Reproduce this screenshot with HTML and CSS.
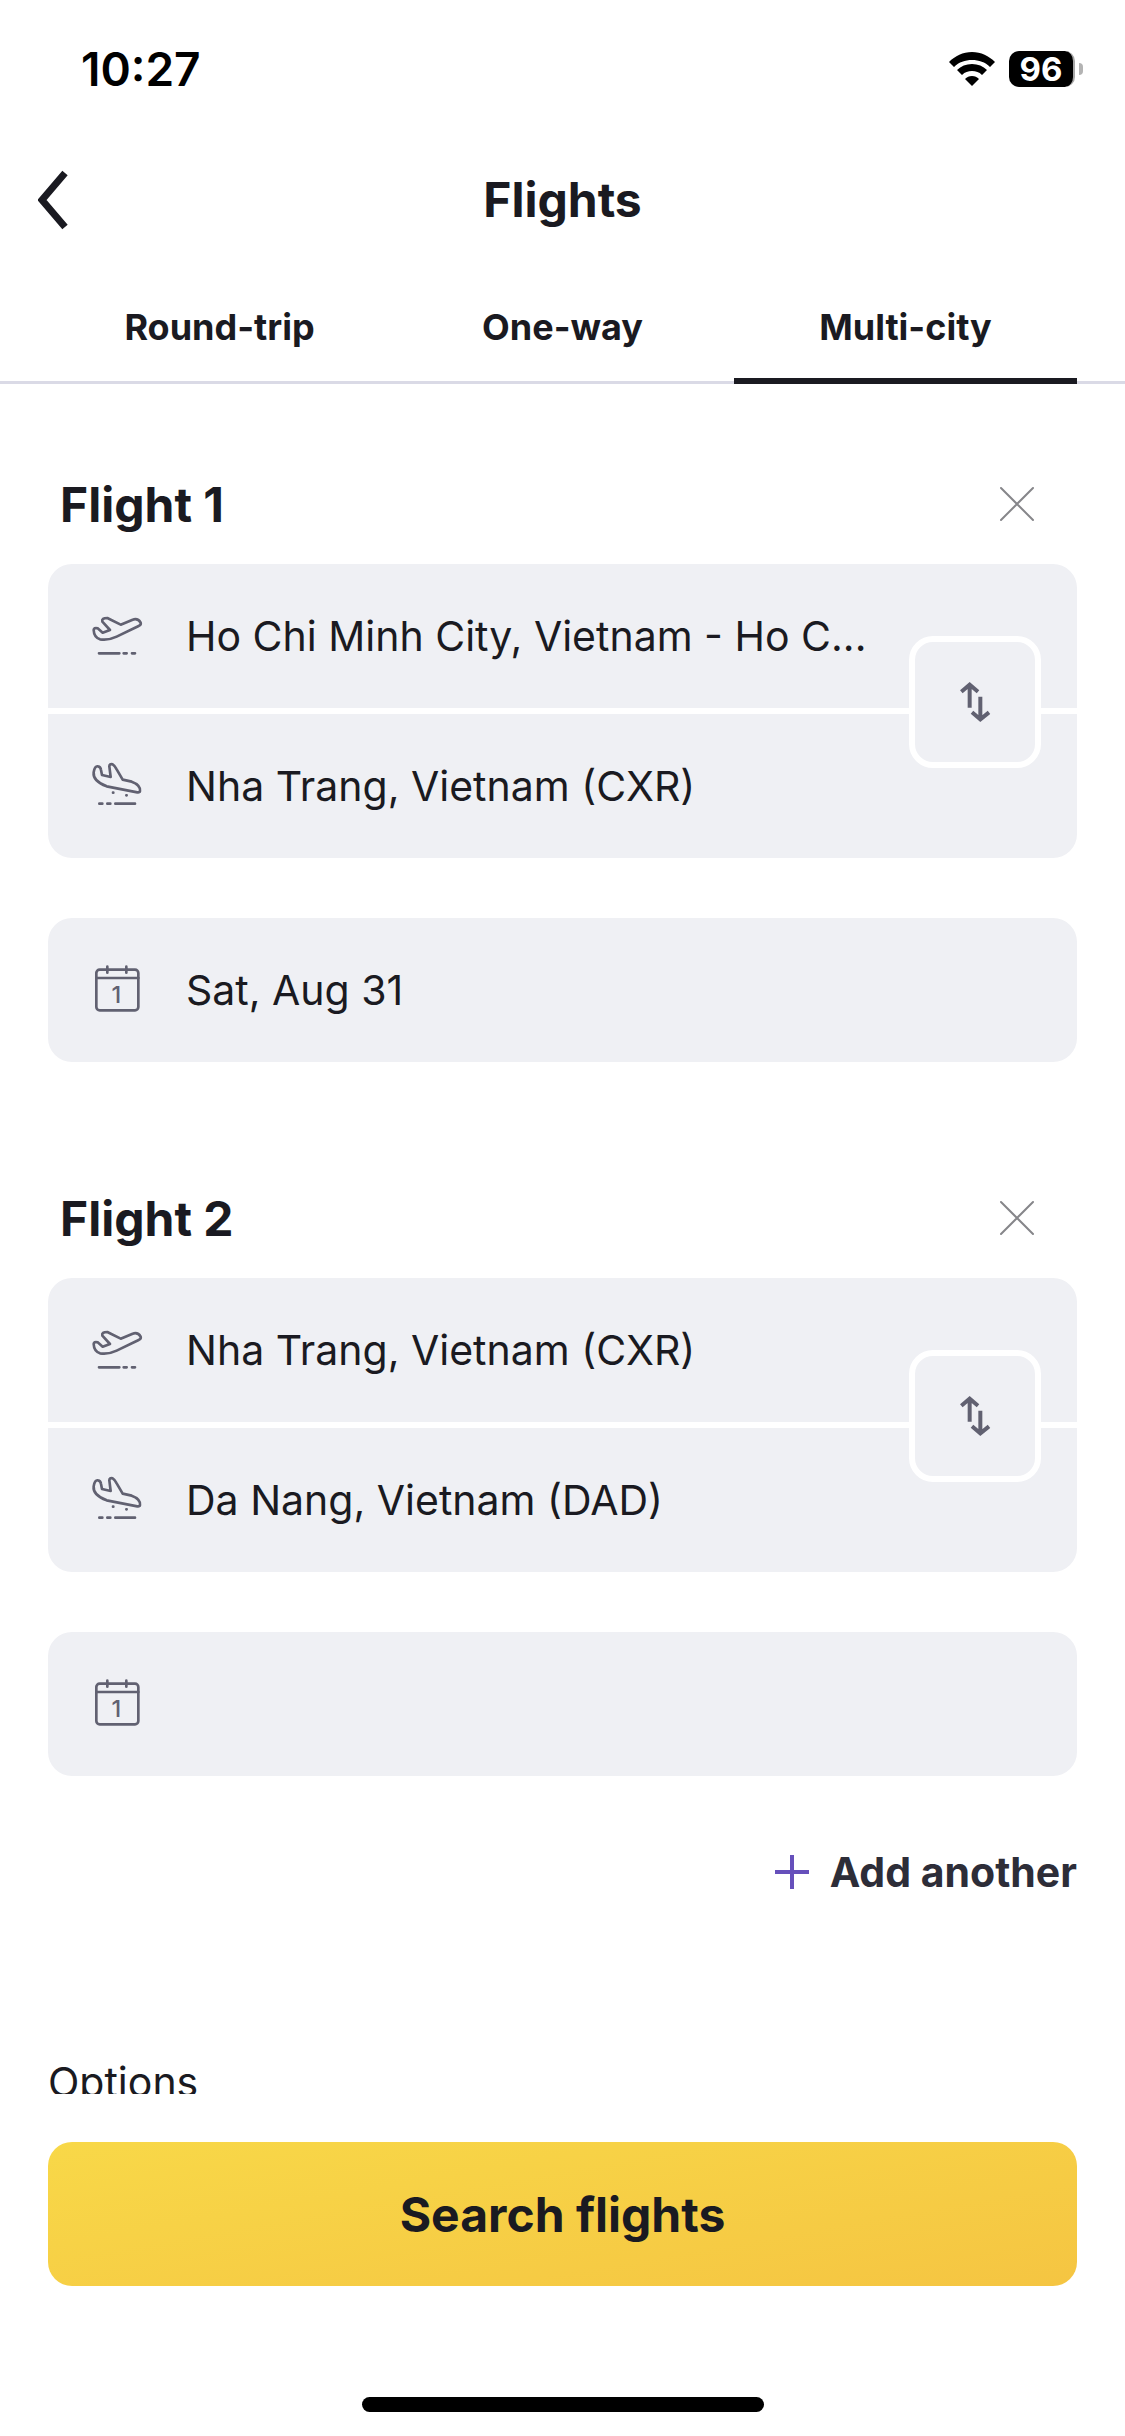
FILE: index.html
```html
<!DOCTYPE html>
<html lang="en">
<head>
    <meta charset="UTF-8">
    <meta name="viewport" content="width=device-width, initial-scale=1.0">
    <title>Flights</title>
    <link rel="stylesheet" href="styles.css">
</head>
<body>

    <!-- icons used more than once -->
    <svg class="sprite" aria-hidden="true">
        <symbol id="takeoff" viewBox="0 0 180 180">
            <path d="M47 80 L69 72 L46 47 Q43 36 61 36 L101 56 L137 41 Q153 36 161 50 Q163 57 155 60 L89 92 Q64 104 39 100 Q21 94 20 72 Q21 64 32 67 Z"/>
            <path d="M36 142 H97 M110 142 H119 M135 142 H144"/>
        </symbol>
        <symbol id="landing" viewBox="0 0 180 180">
            <path d="M45 57 L71 63 L67 31 Q67 23 77 25 Q84 29 89 40 L107 71 L134 77 Q161 87 159 105 Q159 110 151 109 L59 91 Q17 75 20 49 Q23 29 33 31 Q41 32 42 42 Z"/>
            <path d="M37 143 H46 M61 143 H70 M85 143 H144 M78 110 h1 M118 118 h1"/>
        </symbol>
        <symbol id="close" viewBox="0 0 36 36">
            <path d="M2 2 L34 34 M34 2 L2 34"/>
        </symbol>
        <symbol id="swap" viewBox="0 0 144 144">
            <path d="M56 20 V89 M31 41 L56 20 L81 41 M88 56 V124 M63 103 L88 124 L114 103"/>
        </symbol>
    </svg>

    <div class="app">

        <div class="status">
            <span class="time">10:27</span>
            <div class="status-icons">
                <svg class="wifi" viewBox="0 0 46 34">
                    <path d="M23 0 C14 0 6 4 0 10 L5 15 C10 10 16 8 23 8 C30 8 36 10 41 15 L46 10 C40 4 32 0 23 0 Z"/>
                    <path d="M23 12 C17 12 12 14 8 18 L13 23 C16 20 19 19 23 19 C27 19 30 20 33 23 L38 18 C34 14 29 12 23 12 Z"/>
                    <path d="M23 24 C20 24 18 25 16 27 L23 34 L30 27 C28 25 26 24 23 24 Z"/>
                </svg>
                <div class="battery"><span>96</span></div>
            </div>
        </div>

        <header class="nav">
            <button class="back" aria-label="Back">
                <svg viewBox="0 0 30 60"><path d="M27 3 L4 30 L27 57"/></svg>
            </button>
            <h1>Flights</h1>
        </header>

        <nav class="tabs">
            <button>Round-trip</button>
            <button>One-way</button>
            <button class="active">Multi-city</button>
        </nav>

        <main>

            <section class="flight">
                <div class="flight-head">
                    <h2>Flight 1</h2>
                    <button class="close" aria-label="Remove flight 1"><svg><use href="#close"/></svg></button>
                </div>
                <div class="route">
                    <label class="field">
                        <svg><use href="#takeoff"/></svg>
                        <input type="text" aria-label="From" value="Ho Chi Minh City, Vietnam - Ho C...">
                    </label>
                    <label class="field">
                        <svg><use href="#landing"/></svg>
                        <input type="text" aria-label="To" value="Nha Trang, Vietnam (CXR)">
                    </label>
                    <button class="swap" aria-label="Swap"><svg><use href="#swap"/></svg></button>
                </div>
                <label class="field date">
                    <svg viewBox="0 0 180 180">
                        <rect x="28" y="29" width="126" height="122" rx="10"/>
                        <path d="M28 54 H154 M61 20 V38 M118 20 V38"/>
                        <text x="88" y="129">1</text>
                    </svg>
                    <input type="text" aria-label="Date" value="Sat, Aug 31">
                </label>
            </section>

            <section class="flight">
                <div class="flight-head">
                    <h2>Flight 2</h2>
                    <button class="close" aria-label="Remove flight 2"><svg><use href="#close"/></svg></button>
                </div>
                <div class="route">
                    <label class="field">
                        <svg><use href="#takeoff"/></svg>
                        <input type="text" aria-label="From" value="Nha Trang, Vietnam (CXR)">
                    </label>
                    <label class="field">
                        <svg><use href="#landing"/></svg>
                        <input type="text" aria-label="To" value="Da Nang, Vietnam (DAD)">
                    </label>
                    <button class="swap" aria-label="Swap"><svg><use href="#swap"/></svg></button>
                </div>
                <label class="field date">
                    <svg viewBox="0 0 180 180">
                        <rect x="28" y="29" width="126" height="122" rx="10"/>
                        <path d="M28 54 H154 M61 20 V38 M118 20 V38"/>
                        <text x="88" y="129">1</text>
                    </svg>
                    <input type="text" aria-label="Date">
                </label>
            </section>

            <button class="add">
                <svg viewBox="0 0 34 34"><path d="M17 0 V34 M0 17 H34"/></svg>
                Add another
            </button>

            <p class="options">Options</p>

        </main>

        <footer>
            <button class="search">Search flights</button>
            <div class="home-bar"></div>
        </footer>

    </div>

</body>
</html>
```
FILE: styles.css
```css
*{
    box-sizing: border-box;
}

body{
    margin: 0;
    background: white;
    color: #1a1a21;
    font-family: Inter, 'Liberation Sans', sans-serif;
    font-size: 41px;
}

h1, h2, p{
    margin: 0;
}

h1, h2, .search{
    font-size: 48px;
    font-weight: 700;
}

button, input{
    border: none;
    padding: 0;
    background: none;
    color: inherit;
    font-family: inherit;
    font-size: inherit;
}

svg{
    display: block;
    fill: none;
}

.sprite{
    position: absolute;
    width: 0;
    height: 0;
}

.app{
    display: flex;
    flex-direction: column;
    height: 100vh;
}

/* status bar */
.status{
    display: flex;
    align-items: center;
    justify-content: space-between;
    height: 138px;
    padding: 0 42px 0 81px;
    color: black;
}

.time{
    font-size: 46px;
    font-weight: 600;
}

.status-icons{
    display: flex;
    align-items: center;
    gap: 14px;
}

.wifi{
    width: 46px;
    height: 34px;
    fill: black;
}

.battery{
    display: flex;
    align-items: center;
    gap: 4px;
}

.battery span{
    width: 66px;
    border-right: 2px solid #a8a8a8;
    border-radius: 10px;
    background: black;
    color: white;
    font-size: 33px;
    font-weight: 700;
    line-height: 36px;
    text-align: center;
}

.battery::after{
    content: '';
    width: 4px;
    height: 12px;
    border-radius: 0 4px 4px 0;
    background: #b3b3b3;
}

/* title and tabs */
.nav{
    display: grid;
    grid-template-columns: 72px 1fr 72px;
    align-items: center;
    height: 123px;
    padding: 0 36px;
    text-align: center;
}

.back svg{
    width: 30px;
    height: 60px;
    margin-left: 2px;
    stroke: #1a1a21;
    stroke-width: 7;
}

.tabs{
    display: flex;
    height: 108px;
    margin-top: 15px;
    padding: 0 48px;
    flex-shrink: 0;
    background: linear-gradient(#dadae6, #dadae6) bottom / 100% 3px no-repeat;
}

.tabs button{
    flex: 1;
    border-bottom: 6px solid transparent;
    font-size: 36px;
    font-weight: 700;
}

.tabs .active{
    border-color: #1a1a21;
}

/* flights */
main{
    flex: 1;
    min-height: 0;
    padding: 84px 48px 0;
    overflow-y: auto;
    scrollbar-width: none;
}

.flight + .flight{
    margin-top: 120px;
}

.flight-head{
    display: flex;
    align-items: center;
    justify-content: space-between;
    height: 72px;
    margin-bottom: 24px;
    padding: 0 24px 0 12px;
}

.close{
    display: flex;
    align-items: center;
    justify-content: center;
    width: 72px;
    height: 72px;
}

.close svg{
    width: 36px;
    height: 36px;
    stroke: #86868a;
    stroke-width: 2;
    stroke-linecap: round;
}

.route{
    position: relative;
    display: flex;
    flex-direction: column;
    gap: 6px;
    border-radius: 24px;
    overflow: hidden;
}

.field{
    display: flex;
    align-items: center;
    gap: 39px;
    height: 144px;
    padding: 0 39px;
    background: #eff0f4;
}

.field svg{
    width: 60px;
    height: 60px;
    flex-shrink: 0;
    stroke: #616171;
    stroke-width: 8;
    stroke-linecap: round;
    stroke-linejoin: round;
}

.field text{
    fill: #616171;
    stroke: none;
    font-size: 70px;
    font-weight: 500;
    text-anchor: middle;
}

.field input{
    flex: 1;
    min-width: 0;
    outline: none;
    text-overflow: ellipsis;
}

.date{
    margin-top: 60px;
    border-radius: 24px;
}

.swap{
    position: absolute;
    top: 72px;
    right: 36px;
    display: flex;
    align-items: center;
    justify-content: center;
    width: 132px;
    height: 132px;
    border: 6px solid white;
    border-radius: 24px;
    background: #eff0f4;
}

.swap svg{
    width: 48px;
    height: 48px;
    stroke: #616171;
    stroke-width: 12;
}

.add{
    display: flex;
    align-items: center;
    gap: 21px;
    height: 72px;
    margin: 60px 0 0 auto;
    color: #2d2d38;
    font-weight: 700;
}

.add svg{
    width: 34px;
    height: 34px;
    stroke: #6650bb;
    stroke-width: 4;
}

.options{
    margin-top: 144px;
    line-height: 60px;
}

/* bottom bar */
footer{
    padding: 48px 48px 24px;
}

.search{
    display: block;
    width: 100%;
    height: 144px;
    border-radius: 24px;
    background: linear-gradient(170deg, #f8d848, #f5c542);
}

.home-bar{
    width: 402px;
    height: 15px;
    margin: 111px auto 0;
    border-radius: 8px;
    background: black;
}
```
